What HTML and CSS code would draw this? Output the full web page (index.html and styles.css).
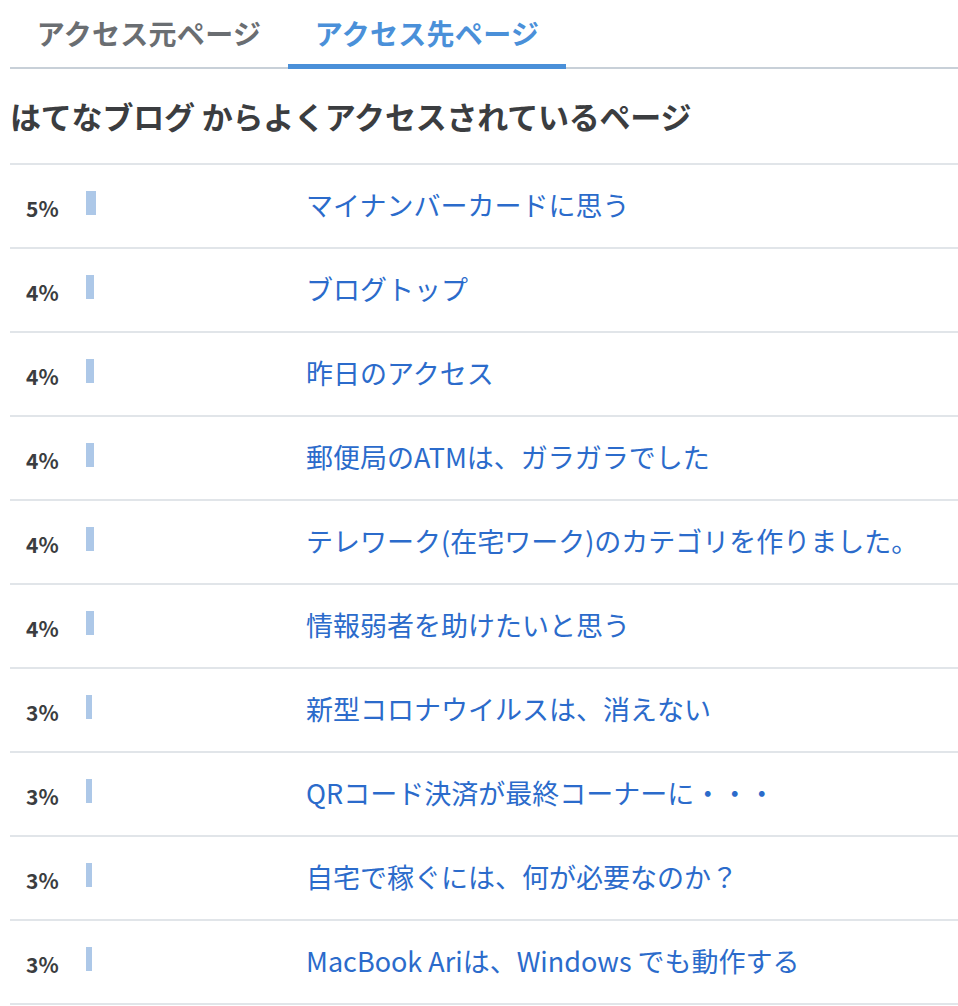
FILE: index.html
```html
<!DOCTYPE html>
<html>
<head>
  <meta charset="utf-8">
  <title>アクセス解析</title>
  <link rel="stylesheet" href="styles.css">
</head>
<body>
  <div class="container">
    <div class="tabs">
      <a class="tab">アクセス元ページ</a>
      <a class="tab active">アクセス先ページ</a>
    </div>
    <h2 class="title">はてなブログ からよくアクセスされているページ</h2>
    <div class="rows">
      <div class="row">
        <span class="pct">5%</span>
        <span class="bar-cell"><span class="bar" style="width: 10px"></span></span>
        <a class="page-link">マイナンバーカードに思う</a>
      </div>
      <div class="row">
        <span class="pct">4%</span>
        <span class="bar-cell"><span class="bar" style="width: 8px"></span></span>
        <a class="page-link">ブログトップ</a>
      </div>
      <div class="row">
        <span class="pct">4%</span>
        <span class="bar-cell"><span class="bar" style="width: 8px"></span></span>
        <a class="page-link">昨日のアクセス</a>
      </div>
      <div class="row">
        <span class="pct">4%</span>
        <span class="bar-cell"><span class="bar" style="width: 8px"></span></span>
        <a class="page-link">郵便局のATMは、ガラガラでした</a>
      </div>
      <div class="row">
        <span class="pct">4%</span>
        <span class="bar-cell"><span class="bar" style="width: 8px"></span></span>
        <a class="page-link">テレワーク(在宅ワーク)のカテゴリを作りました。</a>
      </div>
      <div class="row">
        <span class="pct">4%</span>
        <span class="bar-cell"><span class="bar" style="width: 8px"></span></span>
        <a class="page-link">情報弱者を助けたいと思う</a>
      </div>
      <div class="row">
        <span class="pct">3%</span>
        <span class="bar-cell"><span class="bar" style="width: 6px"></span></span>
        <a class="page-link">新型コロナウイルスは、消えない</a>
      </div>
      <div class="row">
        <span class="pct">3%</span>
        <span class="bar-cell"><span class="bar" style="width: 6px"></span></span>
        <a class="page-link">QRコード決済が最終コーナーに・・・</a>
      </div>
      <div class="row">
        <span class="pct">3%</span>
        <span class="bar-cell"><span class="bar" style="width: 6px"></span></span>
        <a class="page-link">自宅で稼ぐには、何が必要なのか？</a>
      </div>
      <div class="row">
        <span class="pct">3%</span>
        <span class="bar-cell"><span class="bar" style="width: 6px"></span></span>
        <a class="page-link">MacBook Ariは、Windows でも動作する</a>
      </div>
    </div>
  </div>
</body>
</html>
```

FILE: styles.css
```css
body {
  margin: 0;
  background: #fff;
  font-family: "Noto Sans CJK JP", "Noto Sans", sans-serif;
}
.container {
  padding-left: 10px;
}
.tabs {
  display: flex;
  border-bottom: 2px solid #c8d0d8;
  height: 67px;
}
.tab {
  display: block;
  padding: 12px 0 0;
  font-size: 28px;
  letter-spacing: 0.3px;
  font-weight: bold;
  color: #6a6e72;
  line-height: 42px;
  box-sizing: border-box;
  width: 278px;
  text-align: center;
}
.tab.active {
  color: #4a90d9;
  border-bottom: 5px solid #4a90d9;
  margin-bottom: -2px;
}
.title {
  margin: 0;
  height: 94px;
  line-height: 94px;
  font-size: 31px;
  letter-spacing: -0.2px;
  font-weight: bold;
  color: #3b3d40;
  border-bottom: 2px solid #e1e5e9;
}
.row {
  display: flex;
  align-items: center;
  height: 82px;
  border-bottom: 2px solid #e1e5e9;
}
.pct {
  width: 76px;
  padding-left: 16px;
  box-sizing: border-box;
  font-size: 21px;
  line-height: 1;
  font-weight: bold;
  color: #3b3d40;
  padding-top: 4px;
}
.bar-cell {
  width: 220px;
  display: flex;
  margin-bottom: 6px;
}
.bar {
  display: block;
  height: 24px;
  background: #adc8e8;
}
.page-link {
  font-size: 27px;
  color: #2b6bcb;
  text-decoration: none;
  margin-bottom: 4px;
}
```
